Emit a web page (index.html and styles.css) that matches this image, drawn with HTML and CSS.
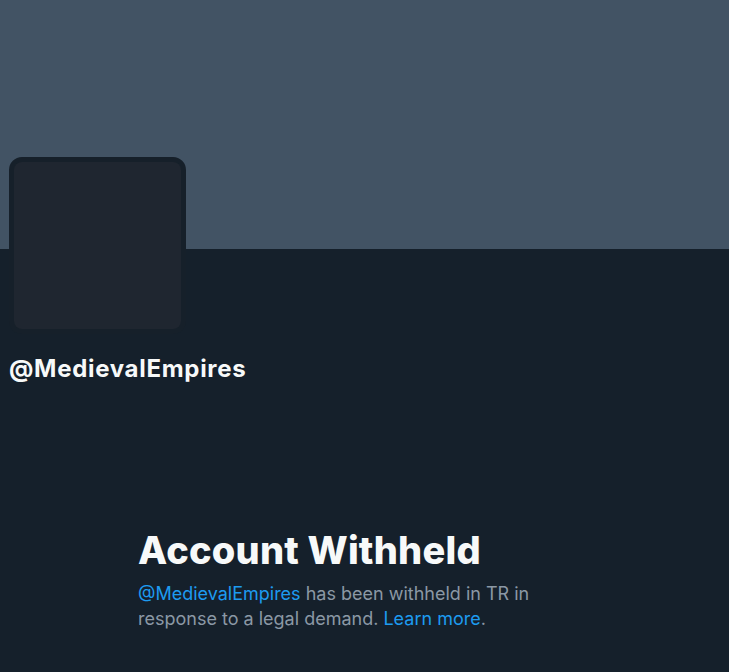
FILE: index.html
```html
<!DOCTYPE html>
<html lang="en">
<head>
<meta charset="utf-8">
<link rel="stylesheet" href="styles.css">
</head>
<body>
<div class="page">
  <div class="banner"></div>
  <div class="profile">
    <div class="avatar"><div class="avatar-inner"></div></div>
    <div class="handle">@MedievalEmpires</div>
  </div>
  <div class="notice">
    <h1 class="title">Account Withheld</h1>
    <p class="desc"><span class="link">@MedievalEmpires</span> has been withheld in TR in response to a legal demand. <span class="link">Learn more</span>.</p>
  </div>
</div>
</body>
</html>
```
FILE: styles.css
```css
html, body {
  margin: 0;
  padding: 0;
  background: #15202b;
}
body {
  font-family: Inter, "Noto Sans", sans-serif;
  color: #f7f9f9;
}
.page {
  width: 729px;
  height: 672px;
  overflow: hidden;
}
.banner {
  height: 249px;
  background: #425364;
}
.profile {
  margin-top: -92px;
  padding-left: 9px;
}
.avatar {
  width: 167px;
  height: 167px;
  border: 5px solid #16202a;
  border-radius: 13px;
  background: #16202a;
}
.avatar-inner {
  width: 100%;
  height: 100%;
  border-radius: 8px;
  background: #1f2630;
}
.handle {
  margin-top: 20px;
  font-size: 24px;
  font-weight: 700;
  line-height: 30px;
  letter-spacing: 0.7px;
}
.notice {
  margin-top: 143px;
  padding-left: 138px;
  width: 400px;
}
.title {
  margin: 0;
  font-size: 38px;
  font-weight: 800;
  line-height: 46px;
  letter-spacing: 0.2px;
}
.desc {
  margin: 8px 0 0;
  font-size: 18px;
  line-height: 25px;
  color: #8b98a5;
}
.link {
  color: #1d9bf0;
}
```
